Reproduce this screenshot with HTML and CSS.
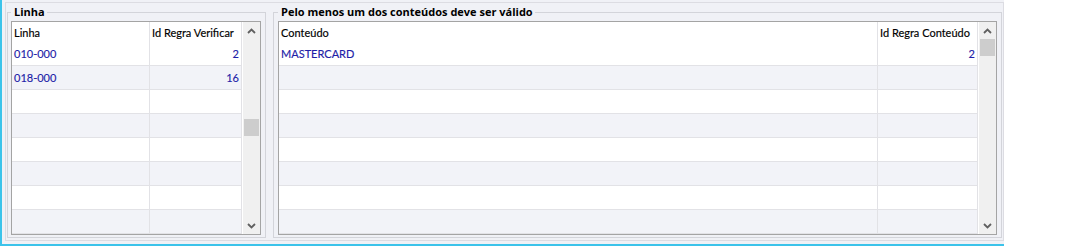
FILE: index.html
```html
<!DOCTYPE html>
<html>
  <head>
    <meta charset="UTF-8">
    <title>Regras</title>
    <link rel="stylesheet" href="styles.css">
  </head>
  <body>
    <div class="app">
      <div class="panel">
        <fieldset class="group group-linha">
          <legend>Linha</legend>
          <div class="grid">
            <div class="table cols-linha">
              <div class="row head"><div class="cell">Linha</div><div class="cell">Id Regra Verificar</div></div>
              <div class="row"><div class="cell">010-000</div><div class="cell num">2</div></div>
              <div class="row"><div class="cell">018-000</div><div class="cell num">16</div></div>
              <div class="row"><div class="cell"></div><div class="cell"></div></div>
              <div class="row"><div class="cell"></div><div class="cell"></div></div>
              <div class="row"><div class="cell"></div><div class="cell"></div></div>
              <div class="row"><div class="cell"></div><div class="cell"></div></div>
              <div class="row"><div class="cell"></div><div class="cell"></div></div>
              <div class="row"><div class="cell"></div><div class="cell"></div></div>
            </div>
            <div class="scrollbar">
              <div class="arrow"><svg width="9" height="6" viewBox="0 0 9 6"><path d="M1 5 L4.5 1.5 L8 5" fill="none" stroke="#606060" stroke-width="1.8"/></svg></div>
              <div class="track"><div class="thumb thumb-mid"></div></div>
              <div class="arrow"><svg width="9" height="6" viewBox="0 0 9 6"><path d="M1 1 L4.5 4.5 L8 1" fill="none" stroke="#606060" stroke-width="1.8"/></svg></div>
            </div>
          </div>
        </fieldset>

        <fieldset class="group group-conteudo">
          <legend>Pelo menos um dos conteúdos deve ser válido</legend>
          <div class="grid">
            <div class="table cols-conteudo">
              <div class="row head"><div class="cell">Conteúdo</div><div class="cell">Id Regra Conteúdo</div></div>
              <div class="row"><div class="cell">MASTERCARD</div><div class="cell num">2</div></div>
              <div class="row"><div class="cell"></div><div class="cell"></div></div>
              <div class="row"><div class="cell"></div><div class="cell"></div></div>
              <div class="row"><div class="cell"></div><div class="cell"></div></div>
              <div class="row"><div class="cell"></div><div class="cell"></div></div>
              <div class="row"><div class="cell"></div><div class="cell"></div></div>
              <div class="row"><div class="cell"></div><div class="cell"></div></div>
              <div class="row"><div class="cell"></div><div class="cell"></div></div>
            </div>
            <div class="scrollbar">
              <div class="arrow"><svg width="9" height="6" viewBox="0 0 9 6"><path d="M1 5 L4.5 1.5 L8 5" fill="none" stroke="#606060" stroke-width="1.8"/></svg></div>
              <div class="track"><div class="thumb"></div></div>
              <div class="arrow"><svg width="9" height="6" viewBox="0 0 9 6"><path d="M1 1 L4.5 4.5 L8 1" fill="none" stroke="#606060" stroke-width="1.8"/></svg></div>
            </div>
          </div>
        </fieldset>
      </div>
    </div>
  </body>
</html>
```

FILE: styles.css
```css
body {
  margin: 0;
  background: #ffffff;
  font-family: Lato, "Liberation Sans", sans-serif;
  font-size: 11px;
}

.app {
  width: 1004px;
  height: 246px;
  box-sizing: border-box;
  background: #f0f1f6;
  border-left: 2px solid #3cc3ea;
  border-bottom: 2px solid #3cc3ea;
  padding: 2px 0 0 3px;
}

.panel {
  display: flex;
  gap: 7px;
  height: 239px;
  box-sizing: border-box;
  border: 1px solid #dcdce2;
  padding: 2px 1px 2px 1px;
}

.group {
  margin: 0;
  min-width: 0;
  padding: 2px 4px 2px 3px;
  border: 1px solid #d3d4da;
}

.group-linha {
  width: 259px;
  box-sizing: border-box;
}

.group-conteudo {
  flex: 1;
  padding-left: 4px;
}

.group legend {
  padding: 0 2px 0 3px;
  line-height: 14px;
  font-family: "Open Sans", Lato, sans-serif;
  font-weight: bold;
  color: #000000;
}

.grid {
  display: flex;
  height: 214px;
  box-sizing: border-box;
  border: 1px solid #a4a4a4;
  background: #ffffff;
}

.table {
  flex: 1;
  margin-right: 1px;
  overflow: hidden;
}

.row {
  display: grid;
  height: 24px;
  box-sizing: border-box;
  border-bottom: 1px solid #e2e2e6;
}

.cols-linha .row {
  grid-template-columns: 138px 1fr;
}

.cols-conteudo .row {
  grid-template-columns: 1fr 100px;
}

.row.head {
  height: 20px;
  border-bottom: none;
  color: #000000;
}

.row:nth-child(odd):not(.head) {
  background: #f2f3f8;
}

.cell {
  display: flex;
  align-items: center;
  padding: 0 2px;
  border-right: 1px solid #e2e2e6;
  white-space: nowrap;
  overflow: hidden;
  color: #1e1ea8;
  -webkit-text-stroke: 0.15px currentColor;
}

.head .cell {
  color: #000000;
}

.cell.num {
  justify-content: flex-end;
}

.scrollbar {
  width: 17px;
  display: flex;
  flex-direction: column;
  background: #f0f0f0;
}

.arrow {
  height: 17px;
  display: flex;
  align-items: center;
  justify-content: center;
}

.track {
  flex: 1;
}

.thumb {
  height: 17px;
  margin: 0 1px;
  background: #cdcdcd;
}

.thumb-mid {
  margin-top: 80px;
}
```
